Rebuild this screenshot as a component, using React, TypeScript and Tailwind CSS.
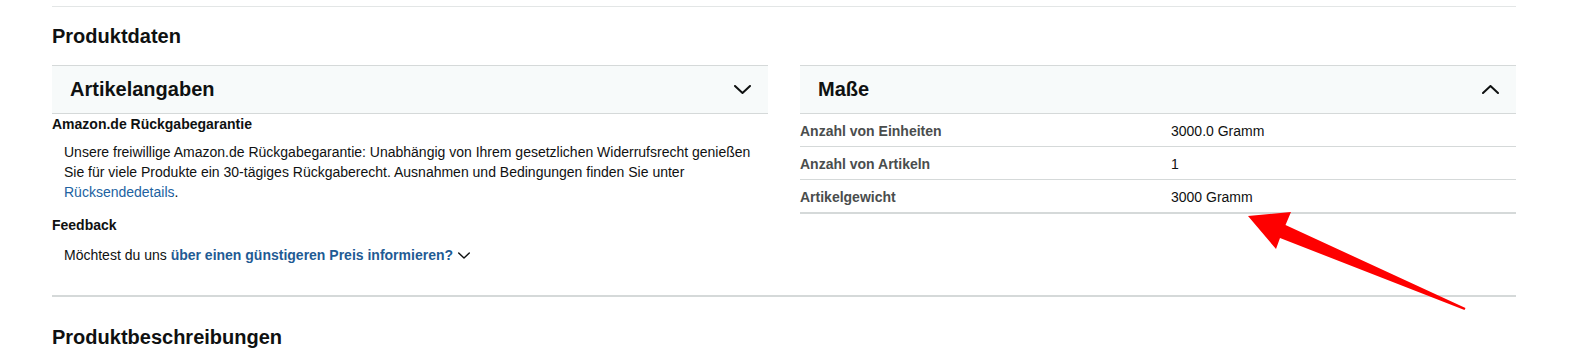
const ChevronDown = ({ w = 17, h = 9 }: { w?: number; h?: number }) => (
  <svg width={w} height={h} viewBox="0 0 17 9" fill="none">
    <path d="M1 1 L8.5 8 L16 1" stroke="#0f1111" strokeWidth="2" strokeLinecap="round" strokeLinejoin="round" />
  </svg>
);

const ChevronUp = () => (
  <svg width={17} height={9} viewBox="0 0 17 9" fill="none">
    <path d="M1 8 L8.5 1 L16 8" stroke="#0f1111" strokeWidth="2" strokeLinecap="round" strokeLinejoin="round" />
  </svg>
);

const rows = [
  { label: "Anzahl von Einheiten", value: "3000.0 Gramm" },
  { label: "Anzahl von Artikeln", value: "1" },
  { label: "Artikelgewicht", value: "3000 Gramm" },
];

const App = () => {
  return (
    <div className="relative w-[1595px] h-[348px] overflow-hidden bg-white font-['Liberation_Sans',Arial,sans-serif] text-[#0f1111]">
      <div className="ml-[52px] w-[1464px]">
        <div className="mt-[6px] h-px bg-[#e3e6e6]" />
        <h2 className="mt-[15px] text-[20px] leading-[28px] font-bold">Produktdaten</h2>

        <div className="mt-[15px] grid grid-cols-2 gap-8 items-start">
          {/* left column */}
          <div>
            <div className="flex items-center justify-between border-y border-[#d5d9d9] bg-[#f7fafa] pl-[18px] pr-[17px] pt-[9px] pb-[10px]">
              <span className="text-[20px] leading-[28px] font-bold">Artikelangaben</span>
              <ChevronDown />
            </div>
            <p className="text-[14px] leading-5 font-bold">Amazon.de Rückgabegarantie</p>
            <p className="mt-2 pl-3 text-[14px] leading-5">
              Unsere freiwillige Amazon.de Rückgabegarantie: Unabhängig von Ihrem gesetzlichen Widerrufsrecht genießen
              Sie für viele Produkte ein 30-tägiges Rückgaberecht. Ausnahmen und Bedingungen finden Sie unter{" "}
              <a className="text-[#2162a1]">Rücksendedetails</a>.
            </p>
            <p className="mt-[13px] text-[14px] leading-5 font-bold">Feedback</p>
            <p className="mt-[10px] pl-3 text-[14px] leading-5 flex items-center">
              <span>Möchtest du uns&nbsp;</span>
              <a className="text-[#1f5b94] font-bold">über einen günstigeren Preis informieren?</a>
              <span className="ml-[5px] inline-flex">
                <ChevronDown w={12} h={7} />
              </span>
            </p>
          </div>

          {/* right column */}
          <div>
            <div className="flex items-center justify-between border-y border-[#d5d9d9] bg-[#f7fafa] pl-[18px] pr-[17px] pt-[9px] pb-[10px]">
              <span className="text-[20px] leading-[28px] font-bold">Maße</span>
              <ChevronUp />
            </div>
            {rows.map((r, i) => (
              <div
                key={r.label}
                className={
                  i === rows.length - 1
                    ? "grid grid-cols-[371px_1fr] h-[34px] pt-[7px] border-b-2 border-[#d5d9d9] text-[14px] leading-5"
                    : "grid grid-cols-[371px_1fr] h-[33px] pt-[7px] border-b border-[#d5d9d9] text-[14px] leading-5"
                }
              >
                <span className="font-bold text-[#4a4d4d]">{r.label}</span>
                <span>{r.value}</span>
              </div>
            ))}
          </div>
        </div>

        <div className="mt-[30px] h-[2px] bg-[#d5d9d9]" />
        <h2 className="mt-[26px] text-[20px] leading-[28px] font-bold">Produktbeschreibungen</h2>
      </div>

      {/* red annotation arrow */}
      <svg className="absolute left-0 top-0 pointer-events-none" width="1595" height="348">
        <polygon
          points="1248,216 1291,212 1285.5,225 1465.5,308 1464.5,310 1280,238 1276,249"
          fill="#fe0000"
          strokeLinejoin="round"
        />
      </svg>
    </div>
  );
};

export default App;
